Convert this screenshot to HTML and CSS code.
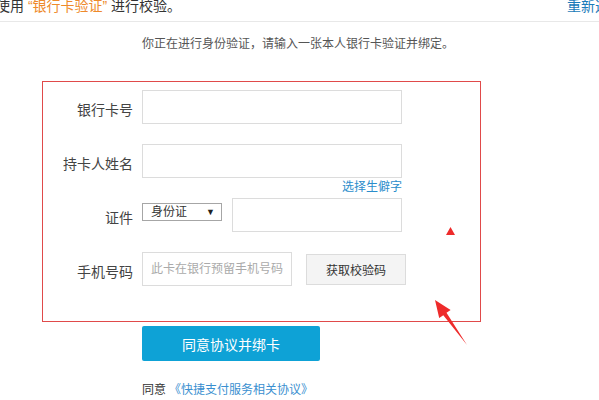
FILE: index.html
```html
<!DOCTYPE html>
<html lang="zh-CN">
<head>
<meta charset="utf-8">
<title>银行卡验证</title>
<link rel="stylesheet" href="styles.css">
</head>
<body>
<div class="topbar">
  <span class="top-text">使用 <em class="hl">“银行卡验证”</em> 进行校验。</span>
  <a class="top-link">重新选择</a>
</div>
<p class="intro">你正在进行身份验证，请输入一张本人银行卡验证并绑定。</p>
<div class="box">
  <div class="row">
    <label class="label">银行卡号</label>
    <input class="field wide" type="text">
  </div>
  <div class="row row-gap">
    <label class="label">持卡人姓名</label>
    <input class="field wide" type="text">
  </div>
  <div class="hint">选择生僻字</div>
  <div class="row row-id">
    <label class="label">证件</label>
    <div class="select"><span>身份证</span><span class="caret">▼</span></div>
    <input class="field idno" type="text">
  </div>
  <div class="row row-gap">
    <label class="label">手机号码</label>
    <input class="field phone" type="text" placeholder="此卡在银行预留手机号码">
    <button class="code-btn" type="button">获取校验码</button>
  </div>
</div>
<button class="submit" type="button">同意协议并绑卡</button>
<p class="agree">同意<a class="agree-link">《快捷支付服务相关协议》</a></p>
<svg class="annot" width="599" height="400" viewBox="0 0 599 400">
  <polygon points="450.5,227 455,235 446,235" fill="#ee2b2b"/>
  <polygon points="435,300 450.6,309.9 446.5,312.8 467,345 443.3,315.2 439.2,318.1" fill="#ee2b2b"/>
</svg>
</body>
</html>
```
FILE: styles.css
```css
html, body {
  margin: 0;
  padding: 0;
}
body {
  width: 599px;
  height: 400px;
  overflow: hidden;
  position: relative;
  background: #fff;
  color: #333;
  font-family: "Liberation Sans", "Noto Sans CJK SC", sans-serif;
}
.topbar {
  display: flex;
  height: 21px;
  border-bottom: 1px solid #e8e8e8;
  font-size: 14px;
  line-height: 12px;
  white-space: nowrap;
  overflow: hidden;
}
.top-text {
  margin-left: -4px;
  color: #333;
}
.hl {
  font-style: normal;
  color: #ee8a2b;
}
.top-link {
  margin-left: auto;
  margin-right: -24px;
  color: #1a7bb9;
}
.intro {
  margin: 12px 0 0 142px;
  font-size: 12px;
  line-height: 20px;
  color: #555;
}
.box {
  margin: 27px 0 0 42px;
  width: 439px;
  box-sizing: border-box;
  border: 1px solid #e04a4a;
  padding: 8px 0 35px 0;
}
.row {
  display: flex;
  align-items: center;
}
.row-gap {
  margin-top: 20px;
}
.row-id {
  margin-top: 2px;
}
.label {
  width: 90px;
  margin-right: 9px;
  padding-top: 4px;
  text-align: right;
  font-size: 14px;
  color: #444;
}
.field {
  box-sizing: border-box;
  height: 34px;
  margin: 0;
  padding: 0 8px;
  border: 1px solid #dcdcdc;
  border-radius: 0;
  outline: none;
  font-family: inherit;
  font-size: 12px;
  color: #333;
  background: #fff;
}
.field::placeholder {
  color: #aaa;
}
.wide {
  width: 260px;
}
.idno {
  width: 170px;
  margin-left: 10px;
}
.phone {
  width: 150px;
}
.hint {
  margin-left: 99px;
  width: 260px;
  text-align: right;
  font-size: 12px;
  line-height: 18px;
  color: #2b8dcb;
}
.select {
  align-self: flex-start;
  margin-top: 5px;
  box-sizing: border-box;
  width: 80px;
  height: 18px;
  border: 1px solid #a6a6a6;
  padding: 0 8px;
  display: flex;
  justify-content: space-between;
  align-items: center;
  font-size: 12px;
  line-height: 16px;
  color: #333;
}
.caret {
  font-size: 9px;
  color: #222;
  margin-right: -2px;
}
.code-btn {
  box-sizing: border-box;
  width: 100px;
  height: 31px;
  margin: 0 0 0 14px;
  padding: 0;
  border: 1px solid #dcdcdc;
  border-radius: 0;
  background: #f4f4f4;
  font-family: inherit;
  font-size: 12px;
  color: #333;
}
.submit {
  display: block;
  box-sizing: border-box;
  width: 178px;
  height: 35px;
  margin: 4px 0 0 142px;
  padding: 0;
  border: none;
  border-radius: 2px;
  background: #0ea2d6;
  color: #fff;
  font-family: inherit;
  font-size: 14px;
}
.agree {
  margin: 19px 0 0 142px;
  font-size: 12px;
  line-height: 20px;
  color: #333;
}
.agree-link {
  margin-left: 3px;
  color: #3a8fd0;
}
.annot {
  position: absolute;
  left: 0;
  top: 0;
  pointer-events: none;
}
```
